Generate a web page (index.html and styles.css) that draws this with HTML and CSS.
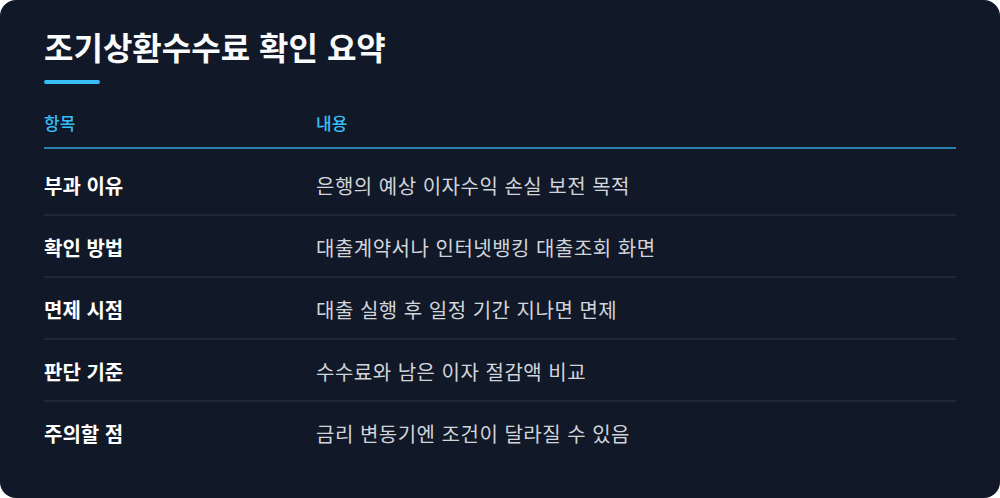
FILE: index.html
```html
<!DOCTYPE html>
<html lang="ko">
<head>
  <meta charset="UTF-8" />
  <meta name="viewport" content="width=device-width, initial-scale=1.0"/>
  <title>조기상환수수료 확인 요약</title>
  <link rel="stylesheet" href="styles.css">
</head>
<body>

  <div class="card">
    <h1 class="title">조기상환수수료 확인 요약</h1>
    <div class="accent"></div>

    <table class="summary">
      <thead>
        <tr>
          <th class="col-item">항목</th>
          <th>내용</th>
        </tr>
      </thead>
      <tbody>
        <tr class="first">
          <td class="label">부과 이유</td>
          <td>은행의 예상 이자수익 손실 보전 목적</td>
        </tr>
        <tr>
          <td class="label">확인 방법</td>
          <td>대출계약서나 인터넷뱅킹 대출조회 화면</td>
        </tr>
        <tr>
          <td class="label">면제 시점</td>
          <td>대출 실행 후 일정 기간 지나면 면제</td>
        </tr>
        <tr>
          <td class="label">판단 기준</td>
          <td>수수료와 남은 이자 절감액 비교</td>
        </tr>
        <tr>
          <td class="label">주의할 점</td>
          <td>금리 변동기엔 조건이 달라질 수 있음</td>
        </tr>
      </tbody>
    </table>
  </div>

</body>
</html>
```

FILE: styles.css
```css
body {
  margin: 0;
  background: #fff;
  font-family: "Noto Sans CJK KR", "Noto Sans", sans-serif;
}

.card {
  width: 1000px;
  height: 498px;
  box-sizing: border-box;
  background: #111827;
  border-radius: 16px;
  padding: 26px 44px;
}

.title {
  margin: 0;
  font-size: 32px;
  font-weight: 700;
  line-height: 40px;
  color: #f9fafb;
}

.accent {
  width: 56px;
  height: 4px;
  margin-top: 14px;
  background: #38bdf8;
  border-radius: 2px;
}

.summary {
  width: 100%;
  margin-top: 27px;
  border-collapse: collapse;
}

.summary th {
  text-align: left;
  font-size: 17px;
  font-weight: 500;
  line-height: 24px;
  color: #38bdf8;
  padding: 0 0 12px;
  border-bottom: 2px solid #2a7fae;
}

.summary .col-item {
  width: 272px;
}

.summary td {
  font-size: 20px;
  line-height: 30px;
  letter-spacing: 0.5px;
  color: #d1d5db;
  padding: 17px 0 13px;
  border-bottom: 2px solid #1f2937;
}

.summary tr.first td {
  padding-top: 22px;
}

.summary tr:last-child td {
  border-bottom: none;
}

.summary td.label {
  color: #fff;
  font-weight: 700;
  letter-spacing: 0;
}
```
